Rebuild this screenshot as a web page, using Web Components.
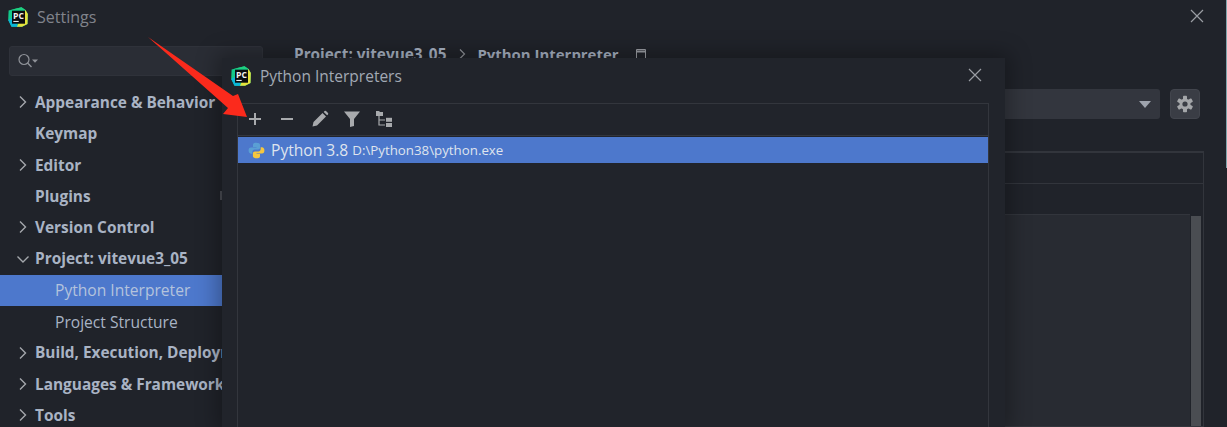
<!DOCTYPE html>
<html><head><meta charset="utf-8"><style>
html,body{margin:0;height:427px;overflow:hidden;background:#20232a;font-family:"Open Sans","Noto Sans",sans-serif}
</style></head><body>
<settings-window></settings-window>
<script>
const PC=`<svg width="20" height="20" viewBox="0 0 20 20" style="flex:none"><path d="M.6 3.500 13.500.3 17.500 3 19.800 7 19.500 17 14 19.700 3.500 19.700.2 13Z" fill="#12c98a"/><path d="M.2 13 3.500 19.700 10 19.800 6 10Z" fill="#0bb5d8"/><path d="M9 19.800 14 19.700 19.500 17 19.800 7 17.500 3 14 8Z" fill="#e6e23c"/><path d="M3 2.800 13.500.3 17.500 3Z" fill="#1fd07f"/><rect x="4" y="3.700" width="13" height="13" fill="#0b0c0e"/><rect x="5.300" y="13.900" width="5.400" height="1.100" fill="#e8e8e8"/><text x="5" y="11.800" font-family="Open Sans,sans-serif" font-size="8.600" font-weight="700" fill="#f2f2f2">PC</text></svg>`;
const X=`<svg width="14" height="14" viewBox="0 0 14 14"><path d="M1 1 13 13M13 1 1 13" stroke="#9a9da3" stroke-width="1.2" fill="none"/></svg>`;
function def(n,html,fn){customElements.define(n,class extends HTMLElement{constructor(){super();this.attachShadow({mode:'open'}).innerHTML=typeof html==='function'?html(this):html;}connectedCallback(){fn&&fn(this)}})}

def('nav-item',h=>{
 const open=h.hasAttribute('open'),sel=h.hasAttribute('selected'),arrow=h.hasAttribute('arrow'),sub=h.hasAttribute('sub');
 return `<style>:host{display:flex;align-items:center;height:31.300px;white-space:nowrap;overflow:hidden;font-size:${sub?15.6:15.4}px;color:#a9b3c4;
 padding-left:${sub?55:35}px;position:relative;font-weight:${sub?400:700};${sel?'background:#4d78cc;color:#b4c3dc':''}}
 svg{position:absolute;left:16px;top:8.500px}</style>
 ${arrow?`<svg width="14" height="14" viewBox="0 0 14 14"><path d="${open?'M1.500 4.500 7 10 12.500 4.500':'M4 1.500 9.500 7 4 12.500'}" stroke="#a4a7ac" stroke-width="1.400" fill="none"/></svg>`:''}<slot></slot>`});

def('search-box',`<style>:host{display:flex;align-items:center;height:30px;box-sizing:border-box;margin:0 0 10.800px 9px;width:254px;background:#2a2d35;border:1px solid #2f323a;border-radius:3px;padding-left:7px}</style>
<svg width="22" height="18" viewBox="0 0 22 18"><circle cx="7" cy="7.500" r="5" stroke="#8f9298" stroke-width="1.200" fill="none"/><path d="M10.600 11 14.500 15" stroke="#8f9298" stroke-width="1.400"/><path d="M15 7.500h6l-3 3.200z" fill="#8f9298"/></svg>`);

def('settings-sidebar',`<style>:host{display:block;width:270px;flex:none;box-sizing:border-box;padding-top:12px;overflow:hidden;position:relative}
.grip{position:absolute;left:220px;top:157px;width:2px;height:9px;background:#4a4d54}</style>
<search-box></search-box>
<nav-item arrow>Appearance &amp; Behavior</nav-item>
<nav-item>Keymap</nav-item>
<nav-item arrow>Editor</nav-item>
<nav-item>Plugins</nav-item>
<nav-item arrow>Version Control</nav-item>
<nav-item arrow open>Project: vitevue3_05</nav-item>
<nav-item sub selected>Python Interpreter</nav-item>
<nav-item sub>Project Structure</nav-item>
<nav-item arrow>Build, Execution, Deployment</nav-item>
<nav-item arrow>Languages &amp; Frameworks</nav-item>
<nav-item arrow>Tools</nav-item>
<div class="grip"></div>`);

def('settings-content',`<style>:host{display:flex;flex-direction:column;flex:1;min-width:0;padding:0 23px 0 24px;font-family:inherit}
.crumb{display:flex;align-items:center;font-size:15.350px;font-weight:700;color:#a9b3c4;height:22px;margin-top:9px;white-space:nowrap}
.sep{margin:0 10px 0 11px}.ic{margin-left:16px}.b{font-size:14.950px}
.row{display:flex;gap:10px;margin-top:24px;justify-content:flex-end;padding-right:4px}
.combo{flex:1;height:30px;background:#33363e;border-radius:3px;display:flex;align-items:center;justify-content:flex-end;padding-right:9px}
.gear{width:30px;height:30px;background:#3a3d45;border:1px solid #42454d;box-sizing:border-box;border-radius:4px;display:flex;align-items:center;justify-content:center}
.table{margin-top:32px;flex:1;border:1px solid #32353c;border-top-width:2px;display:flex;flex-direction:column;margin-right:0}
.h{height:30px;border-bottom:1px solid #32353c;flex:none}
.h2{height:30px;flex:none}
.body{flex:1;background:#282b32;position:relative;margin-right:13px;border-top:1px solid #32353c}
.bar{position:absolute;right:-11px;top:1px;width:10px;bottom:0;background:#4a4d52}</style>
<div class="crumb"><span>Project: vitevue3_05</span><svg class="sep" width="10" height="12" viewBox="0 0 10 12"><path d="M3 1.500 7.500 6 3 10.500" stroke="#8f9298" stroke-width="1.200" fill="none"/></svg><span class="b">Python Interpreter</span><svg class="ic" width="12" height="12" viewBox="0 0 12 12"><path d="M1.500 1.500h9v9h-9z" stroke="#9a9da3" fill="none"/><path d="M1 3.500h10" stroke="#9a9da3" stroke-width="2"/></svg></div>
<div class="row"><div class="combo"><svg width="12" height="7" viewBox="0 0 12 7"><path d="M0 0h12L6 7z" fill="#9ea3ad"/></svg></div>
<div class="gear"><svg width="18" height="18" viewBox="0 0 18 18"><g fill="#a4a6a9"><circle cx="9" cy="9" r="5.500"/><rect x="7" y=".8" width="4" height="16.400" rx=".8"/><rect x="7" y=".8" width="4" height="16.400" rx=".8" transform="rotate(60 9 9)"/><rect x="7" y=".8" width="4" height="16.400" rx=".8" transform="rotate(120 9 9)"/></g><circle cx="9" cy="9" r="2.600" fill="#3a3d45"/></svg></div></div>
<div class="table"><div class="h"></div><div class="h2"></div><div class="body"><div class="bar"></div></div></div>`);

def('tool-bar',`<style>:host{display:flex;align-items:center;border-bottom:1px solid #33363d;padding:0 0 2px 8px;box-sizing:border-box;flex:none;height:32px}
svg{display:block;width:18px;height:18px;margin-right:14.300px}</style>
<svg viewBox="0 0 18 18"><path d="M9 3v12M3 9h12" stroke="#a8aaad" stroke-width="2"/></svg>
<svg viewBox="0 0 18 18"><path d="M3 9h12" stroke="#a8aaad" stroke-width="2"/></svg>
<svg viewBox="0 0 18 18"><path d="M1.500 16.500 2.500 12 11.500 3 15 6.500 6 15.500ZM12.700 1.900 13.600 1Q14.300.5 15 1L17 3Q17.500 3.700 17 4.400L16.100 5.300Z" fill="#a8aaad"/></svg>
<svg viewBox="0 0 18 18"><path d="M1 1.500h16L11 9v7l-4 1V9Z" fill="#a8aaad"/></svg>
<svg viewBox="0 0 18 18" style="margin:0"><path d="M1 1h3l1 1h3v4H1z" fill="#a8aaad"/><path d="M4 6v9h6M4 10h6" stroke="#a8aaad" stroke-width="1.200" fill="none"/><rect x="11" y="7.800" width="6" height="4" fill="#a8aaad"/><rect x="11" y="13" width="6" height="4" fill="#a8aaad"/></svg>`);

def('interpreter-row',`<style>:host{display:flex;align-items:center;height:26px;margin-top:1px;background:#4d78cc;color:#dfe4ee;white-space:nowrap;padding-left:10px;flex:none}
svg{margin-right:6px}.n{font-size:15.600px}.p{font-size:13.300px;margin-left:4px}</style>
<svg width="17" height="17" viewBox="0 0 17 17"><path d="M8.300.8C5 .8 5 2.200 5 3.300v1.600h3.500v.6H3C1.400 5.500.6 6.800.6 8.600s.9 3.100 2.400 3.100h1.300V9.900c0-1.300 1-2.400 2.400-2.400h3.400c1.100 0 2-.9 2-2V3.100C12.100 1.600 10.700.8 8.300.8Z" fill="#5a9fd4"/><path d="M8.700 16.200c3.300 0 3.300-1.400 3.300-2.500v-1.600H8.500v-.6H14c1.600 0 2.400-1.300 2.400-3.100s-.9-3.100-2.400-3.100h-1.300v1.800c0 1.300-1 2.400-2.400 2.400H6.900c-1.100 0-2 .9-2 2v2.400c0 1.500 1.400 2.300 3.800 2.300Z" fill="#f5c73f"/></svg>
<span class="n">Python 3.8</span><span class="p">D:\\Python38\\python.exe</span>`);

def('interpreter-dialog',`<style>:host{position:absolute;left:222px;top:58px;width:783px;height:369px;box-sizing:border-box;background:#21242b;display:flex;flex-direction:column;box-shadow:0 0 20px 5px rgba(0,0,0,.3);padding:0 16px 0 15px}
.t{display:flex;align-items:center;height:36px;margin-left:-6px;margin-bottom:9px;gap:9px;font-size:15.500px;color:#a2a9b4;flex:none}
.t span{flex:1}.t .x{margin-right:7px;display:block}
.list{flex:1;border:1px solid #33363d;border-bottom:0;display:flex;flex-direction:column}</style>
<div class="t">${PC}<span>Python Interpreters</span><div class="x">${X}</div></div>
<div class="list"><tool-bar></tool-bar><interpreter-row></interpreter-row></div>`);

def('settings-window',`<style>:host{display:flex;flex-direction:column;position:relative;width:1227px;height:427px;background:#20232a;overflow:hidden}
.title{display:flex;align-items:center;height:34px;flex:none;padding:0 0 0 8px;gap:9px;font-size:16px;color:#80848c;box-sizing:border-box}
.title span{flex:1}.x{margin-right:23px;display:block}
.main{display:flex;flex:1;min-height:0}
.edge{position:absolute;right:0;top:0;width:1px;height:168px;background:#7fa5ad}
.arrow{position:absolute;left:146px;top:35px;pointer-events:none}</style>
<div class="title">${PC}<span>Settings</span><div class="x">${X}</div></div>
<div class="main"><settings-sidebar></settings-sidebar><settings-content></settings-content></div>
<interpreter-dialog></interpreter-dialog>
<div class="edge"></div>
<svg class="arrow" width="105" height="95" viewBox="146 35 105 95"><path d="M148 37 233 96 238 94 247 117 223 114 228 108Z" fill="#fb2a1c"/></svg>`);
</script>
</body></html>
